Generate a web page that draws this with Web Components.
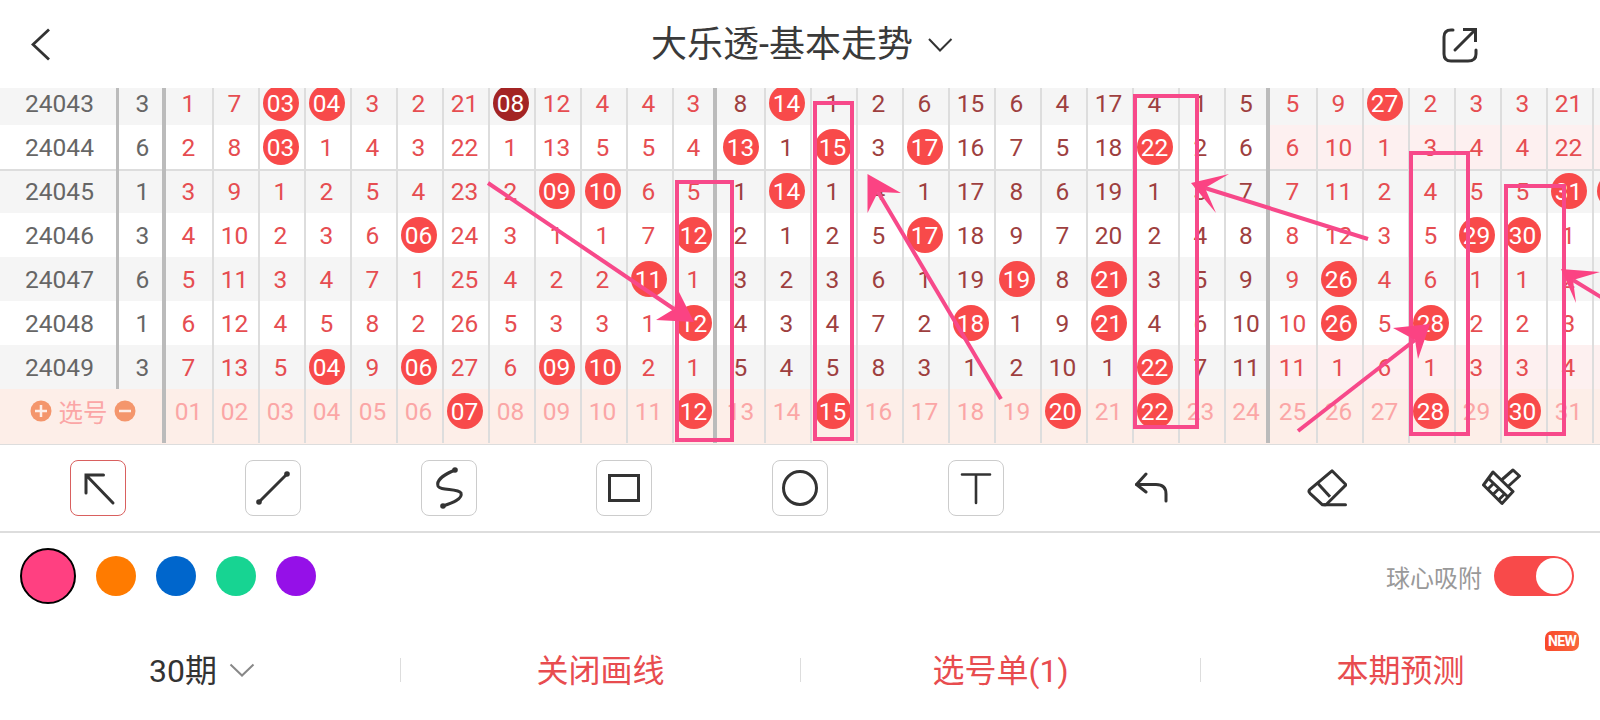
<!DOCTYPE html>
<html lang="zh">
<head>
<meta charset="utf-8">
<title>大乐透-基本走势</title>
<style>
    html, body { margin: 0; padding: 0; background: #fff; }
    body {
        position: relative;
        width: 1600px;
        height: 720px;
        overflow: hidden;
        font-family: Roboto, "Noto Sans CJK SC", sans-serif;
    }
</style>
</head>
<body>
<app-header title="大乐透-基本走势"></app-header>
<trend-table></trend-table>
<tool-bar></tool-bar>
<color-bar></color-bar>
<bottom-bar></bottom-bar>
<sketch-layer></sketch-layer>

<script>
const CJK = `Roboto, "Noto Sans CJK SC", sans-serif`;

class AppHeader extends HTMLElement {
    constructor() {
        super();
        this.attachShadow({ mode: 'open' });
    }

    connectedCallback() {
        this.shadowRoot.innerHTML = `
            <style>
                :host {
                    display: grid;
                    grid-template-columns: 1fr auto 1fr;
                    align-items: center;
                    height: 88px;
                    color: #3a3a3a;
                    font-family: ${CJK};
                }
                .back { padding: 1px 0 0 31px; display: flex; }
                .title {
                    display: flex;
                    align-items: center;
                    gap: 14px;
                    font-size: 36px;
                    line-height: 88px;
                    margin-left: 4px;
                }
                .title span { padding-top: 1px; }
                .share { display: flex; justify-content: flex-end; padding-right: 122px; }
                svg { display: block; fill: none; stroke: #333; }
            </style>
            <div class="back">
                <svg width="20" height="34" viewBox="0 0 20 34" stroke-width="2.8">
                    <path d="M18 1.5 L2 16.5 L18 31.5"/>
                </svg>
            </div>
            <div class="title">
                <span>${this.getAttribute('title')}</span>
                <svg width="26" height="16" viewBox="0 0 26 16" stroke-width="2">
                    <path d="M2 2 L13 13.5 L24.500 2"/>
                </svg>
            </div>
            <div class="share">
                <svg width="36" height="36" viewBox="0 0 36 36" stroke-width="3">
                    <path d="M11 3 H9 Q2 3 2 10 V27 Q2 34 9 34 H26 Q34 34 34 27 V23" stroke-linecap="round"/>
                    <path d="M13 23 L33 3" stroke-linecap="round"/>
                    <path d="M21 2.500 H33.500 V15"/>
                </svg>
            </div>
        `;
    }
}

// * ball, # dark ball
const ROWS = [
    ['24043', '3', '1 7 *03 *04 3 2 21 #08 12 4 4 3 8 *14 1 2 6 15 6 4 17 4 1 5 5 9 *27 2 3 3 21 _', false],
    ['24044', '6', '2 8 *03 1 4 3 22 1 13 5 5 4 *13 1 *15 3 *17 16 7 5 18 *22 2 6 6 10 1 3 4 4 22 _', true],
    ['24045', '1', '3 9 1 2 5 4 23 2 *09 *10 6 5 1 *14 1 4 1 17 8 6 19 1 3 7 7 11 2 4 5 5 *31 *', false],
    ['24046', '3', '4 10 2 3 6 *06 24 3 1 1 7 *12 2 1 2 5 *17 18 9 7 20 2 4 8 8 12 3 5 *29 *30 1 _', false],
    ['24047', '6', '5 11 3 4 7 1 25 4 2 2 *11 1 3 2 3 6 1 19 *19 8 *21 3 5 9 9 *26 4 6 1 1 2 _', false],
    ['24048', '1', '6 12 4 5 8 2 26 5 3 3 1 *12 4 3 4 7 2 *18 1 9 *21 4 6 10 10 *26 5 *28 2 2 3 _', false],
    ['24049', '3', '7 13 5 *04 9 *06 27 6 *09 *10 2 1 5 4 5 8 3 1 2 10 1 *22 7 11 11 1 6 1 3 3 4 _', true]
];
const PICKED = [7, 12, 15, 20, 22, 28, 30];

class TrendTable extends HTMLElement {
    constructor() {
        super();
        this.attachShadow({ mode: 'open' });
    }

    connectedCallback() {
        const rows = ROWS.map((r, i) => {
            const cls = (i % 2 === 0 ? 'row odd' : 'row') + (i === 2 ? ' rule' : '');
            const cells = r[2].split(' ').map((v, k) => this.cell(v, k, r[3])).join('');
            return `<div class="${cls}"><div class="issue"><span>${r[0]}</span></div><div class="count"><span>${r[1]}</span></div>${cells}</div>`;
        }).join('');

        let picks = '';
        for (let k = 0; k < 32; k++) {
            const n = String(k + 1).padStart(2, '0');
            const v = k === 31 ? '_' : (PICKED.includes(k + 1) ? '*' + n : n);
            picks += this.cell(v, k, false);
        }

        this.shadowRoot.innerHTML = `
            <style>
                :host {
                    display: block;
                    height: 357px;
                    overflow: hidden;
                    font-family: ${CJK};
                    font-size: 24.500px;
                }
                .inner { margin-top: -7px; }
                .row, .picker {
                    display: grid;
                    grid-template-columns: 119px 47px 48px repeat(10, 46px) 43px 49px repeat(10, 46px) 44px 48px repeat(7, 46px);
                    height: 44px;
                    width: 1640px;
                }
                .odd { background: #f5f5f5; }
                .rule { box-shadow: inset 0 2px 0 #ddd; }
                .picker {
                    height: 55px;
                    background: #fdeee8;
                    border-bottom: 1px solid #ddd;
                }
                .issue, .count, .c, .pick-label {
                    display: flex;
                    align-items: center;
                    justify-content: center;
                    box-sizing: border-box;
                    color: #666;
                }
                span { padding-top: 1px; }
                .issue { border-right: 3px solid #bbb; padding-left: 3px; }
                .count { border-right: 4px solid #bbb; padding-left: 4px; }
                .c {
                    border-right: 2px solid #ddd;
                    padding-right: 3px;
                    color: #e64d51;
                }
                .c.dark { color: #9e3f3f; }
                .c.hot { background: #fdf0f0; }
                .c.first, .c.p2 { padding-right: 1px; }
                .c.p1 { padding-right: 0; }
                .c.thick { border-right: 4px solid #bbb; padding-right: 0; }
                .ball {
                    flex: none;
                    width: 36px;
                    height: 36px;
                    box-sizing: border-box;
                    padding-top: 1px;
                    border-radius: 50%;
                    background: #f84a4a;
                    color: #fff;
                    display: flex;
                    align-items: center;
                    justify-content: center;
                }
                .ball.deep { background: #a32424; }
                .picker .c { color: #fba6a6; height: 54px; align-items: flex-start; padding-top: 4px; }
                .picker .c .ball { color: #fff; }
                .picker .c span { line-height: 36px; }
                .pick-label {
                    grid-column: 1 / span 2;
                    height: 54px;
                    border-right: 4px solid #bbb;
                    padding: 0 26px 10px 30px;
                    justify-content: space-between;
                    color: #fba6a6;
                }
                .sign { display: block; }
            </style>
            <div class="inner">
                ${rows}
                <div class="picker">
                    <div class="pick-label">
                        <svg class="sign" width="22" height="22" viewBox="0 0 22 22">
                            <circle cx="11" cy="11" r="10.500" fill="#f4966c"/>
                            <path d="M11 5 V17 M5 11 H17" stroke="#fdeee8" stroke-width="2.500"/>
                        </svg>
                        <span>选号</span>
                        <svg class="sign" width="22" height="22" viewBox="0 0 22 22">
                            <circle cx="11" cy="11" r="10.500" fill="#f4966c"/>
                            <path d="M5 11 H17" stroke="#fdeee8" stroke-width="2.500"/>
                        </svg>
                    </div>
                    ${picks}
                </div>
            </div>
        `;
    }

    cell(v, k, hot) {
        const col = k + 1;
        const cls = ['c'];
        if (col >= 13 && col <= 24) cls.push('dark');
        if (hot && col >= 25) cls.push('hot');
        if (col === 1) cls.push('first');
        if (col === 25) cls.push('p2');
        if (col === 13) cls.push('p1');
        if (col === 12 || col === 24) cls.push('thick');
        let inner = '';
        if (v[0] === '*') inner = `<div class="ball">${v.slice(1)}</div>`;
        else if (v[0] === '#') inner = `<div class="ball deep">${v.slice(1)}</div>`;
        else if (v !== '_') inner = `<span>${v}</span>`;
        return `<div class="${cls.join(' ')}">${inner}</div>`;
    }
}

const TOOL_ICONS = {
    arrow: '<path d="M16 15 L43 43 M33.500 15 H16 V33"/>',
    line: '<path d="M14 42 L42 14"/><circle cx="42" cy="14" r="2.800" class="dot"/><circle cx="14" cy="42" r="2.800" class="dot"/>',
    curve: '<path d="M34 10 C24 14 15 20 17 26 C19 31 37 28 40 33 C42 39 31 43 22 46"/><circle cx="34" cy="10" r="2.800" class="dot"/><circle cx="22" cy="46" r="2.800" class="dot"/>',
    rect: '<rect x="13.500" y="15.500" width="29" height="25"/>',
    circle: '<circle cx="28" cy="28" r="16.500"/>',
    text: '<path d="M14 14.500 H42 M28 14.500 V43" stroke-width="2.600"/>'
};

class ToolButton extends HTMLElement {
    constructor() {
        super();
        this.attachShadow({ mode: 'open' });
    }

    connectedCallback() {
        const active = this.hasAttribute('active');
        this.shadowRoot.innerHTML = `
            <style>
                :host {
                    display: block;
                    width: 56px;
                    height: 56px;
                    box-sizing: border-box;
                    border: 1px solid ${active ? '#d9605f' : '#ccc'};
                    border-radius: 8px;
                    background: #fff;
                }
                svg { display: block; margin: -1px; fill: none; stroke: #333; stroke-width: 3; stroke-linecap: round; }
                .dot { fill: #333; stroke: none; }
                rect { stroke-linecap: butt; }
            </style>
            <svg width="56" height="56" viewBox="0 0 56 56">${TOOL_ICONS[this.getAttribute('icon')]}</svg>
        `;
    }
}

class ToolBar extends HTMLElement {
    constructor() {
        super();
        this.attachShadow({ mode: 'open' });
    }

    connectedCallback() {
        const btns = ['arrow', 'line', 'curve', 'rect', 'circle', 'text']
            .map((n, i) => `<div class="slot"><tool-button icon="${n}" ${i === 0 ? 'active' : ''}></tool-button></div>`)
            .join('');
        this.shadowRoot.innerHTML = `
            <style>
                :host {
                    display: grid;
                    grid-template-columns: repeat(9, 1fr);
                    height: 88px;
                    box-sizing: border-box;
                    padding: 0 10px;
                    border-bottom: 2px solid #ddd;
                }
                .slot { display: flex; align-items: center; justify-content: center; }
                svg { display: block; fill: none; stroke: #333; stroke-width: 3; stroke-linejoin: round; }
            </style>
            ${btns}
            <div class="slot">
                <svg width="36" height="32" viewBox="0 0 36 32" stroke-linecap="round">
                    <path d="M13 2 L3.500 12.500 L13 20"/>
                    <path d="M3.500 12.500 H23 Q33 12.500 33 22 V29"/>
                </svg>
            </div>
            <div class="slot">
                <svg width="40" height="38" viewBox="0 0 40 38">
                    <path d="M25 1.800 L39 15.800 L19 35.800 H15.500 L3 24.300 Q1 22.300 3 20.300 Z"/>
                    <path d="M10 13.500 L23 27.800"/>
                    <path d="M17 35.800 H38.500" stroke-linecap="round"/>
                </svg>
            </div>
            <div class="slot">
                <svg width="40" height="40" viewBox="0 0 40 40" stroke-width="2.200">
                    <path d="M11 4 L31 23.500 L20 35.500 L1.500 17 Z"/>
                    <path d="M19 12.500 L31 2 L37.500 8 L26 18.500"/>
                    <path d="M7 11 L26 29"/>
                    <path d="M6 21 L11 16 M11.500 26 L16.500 21 M17 31.500 L22 26.500"/>
                </svg>
            </div>
        `;
    }
}

class ColorBar extends HTMLElement {
    constructor() {
        super();
        this.attachShadow({ mode: 'open' });
    }

    connectedCallback() {
        this.shadowRoot.innerHTML = `
            <style>
                :host {
                    display: flex;
                    align-items: center;
                    gap: 20px;
                    height: 86px;
                    padding: 0 26px 0 20px;
                    box-sizing: border-box;
                    font-family: ${CJK};
                }
                .dot { width: 40px; height: 40px; border-radius: 50%; }
                .on { width: 56px; height: 56px; box-sizing: border-box; border: 2px solid #000; }
                .label { margin-left: auto; font-size: 24px; color: #999; }
                .toggle {
                    width: 80px;
                    height: 40px;
                    border-radius: 20px;
                    background: #f84a4a;
                    margin-left: -8px;
                    display: flex;
                    align-items: center;
                    justify-content: flex-end;
                    padding-right: 2px;
                    box-sizing: border-box;
                }
                .knob { width: 36px; height: 36px; border-radius: 50%; background: #fff; }
            </style>
            <div class="dot on" style="background:#ff4081"></div>
            <div class="dot" style="background:#ff7b00"></div>
            <div class="dot" style="background:#0066cc"></div>
            <div class="dot" style="background:#17d492"></div>
            <div class="dot" style="background:#9510e8"></div>
            <div class="label">球心吸附</div>
            <div class="toggle"><div class="knob"></div></div>
        `;
    }
}

class BottomBar extends HTMLElement {
    constructor() {
        super();
        this.attachShadow({ mode: 'open' });
    }

    connectedCallback() {
        this.shadowRoot.innerHTML = `
            <style>
                :host {
                    display: grid;
                    grid-template-columns: repeat(4, 1fr);
                    align-items: center;
                    height: 101px;
                    font-family: ${CJK};
                    font-size: 32px;
                    color: #e84c4f;
                }
                .item {
                    position: relative;
                    height: 24px;
                    display: flex;
                    align-items: center;
                    justify-content: center;
                    gap: 12px;
                    white-space: nowrap;
                }
                .item + .item { border-left: 1px solid #ddd; }
                .item span.txt { position: relative; top: -2px; }
                .period { color: #333; padding-left: 4px; }
                svg { display: block; fill: none; stroke: #888; stroke-width: 2; }
                .new {
                    position: absolute;
                    top: -27px;
                    left: 344px;
                    width: 34px;
                    height: 20px;
                    border-radius: 7px 7px 7px 3px;
                    background: linear-gradient(90deg, #f9482a, #f9683c);
                    color: #fff;
                    font: 700 14px/20px Roboto, sans-serif;
                    letter-spacing: -0.6px;
                    text-align: center;
                }
            </style>
            <div class="item period"><span class="txt">30期</span>
                <svg width="26" height="14" viewBox="0 0 26 14"><path d="M1.500 1.500 L13 12.500 L24.500 1.500"/></svg>
            </div>
            <div class="item"><span class="txt">关闭画线</span></div>
            <div class="item"><span class="txt">选号单(1)</span></div>
            <div class="item"><span class="txt">本期预测</span><span class="new">NEW</span></div>
        `;
    }
}

const SKETCH_RECTS = [
    [677, 182, 55, 258],
    [815, 103, 37, 336],
    [1135, 96, 62, 331],
    [1411, 153, 57, 281],
    [1506, 186, 58, 248]
];
// tail, notch, barb, tip, barb
const SKETCH_ARROWS = [
    [[488, 183], [674, 309], [678, 290], [694, 322], [656, 320]],
    [[1001, 399], [878, 192], [901, 193], [867.500, 174], [867.500, 213]],
    [[1368, 239], [1205, 188], [1229, 174], [1191, 183], [1216, 213]],
    [[1298, 431], [1415, 340], [1393, 328], [1430, 324], [1418, 359]],
    [[1640, 321], [1573, 280], [1600, 272], [1561, 269], [1576, 303]]
];

class SketchLayer extends HTMLElement {
    constructor() {
        super();
        this.attachShadow({ mode: 'open' });
    }

    connectedCallback() {
        const rects = SKETCH_RECTS
            .map(([x, y, w, h]) => `<rect x="${x}" y="${y}" width="${w}" height="${h}"/>`)
            .join('');
        const arrows = SKETCH_ARROWS.map(([tail, notch, a, tip, b]) => `
            <line x1="${tail[0]}" y1="${tail[1]}" x2="${notch[0]}" y2="${notch[1]}"/>
            <polygon points="${notch} ${a} ${tip} ${b}"/>
        `).join('');
        this.shadowRoot.innerHTML = `
            <style>
                :host {
                    position: absolute;
                    top: 0;
                    left: 0;
                    pointer-events: none;
                }
                svg { display: block; }
                rect, line { fill: none; stroke: #f7498a; stroke-width: 4; }
                polygon { fill: #fb4383; stroke: none; }
            </style>
            <svg width="1600" height="720" viewBox="0 0 1600 720">${rects}${arrows}</svg>
        `;
    }
}

customElements.define('app-header', AppHeader);
customElements.define('trend-table', TrendTable);
customElements.define('tool-button', ToolButton);
customElements.define('tool-bar', ToolBar);
customElements.define('color-bar', ColorBar);
customElements.define('bottom-bar', BottomBar);
customElements.define('sketch-layer', SketchLayer);
</script>
</body>
</html>
